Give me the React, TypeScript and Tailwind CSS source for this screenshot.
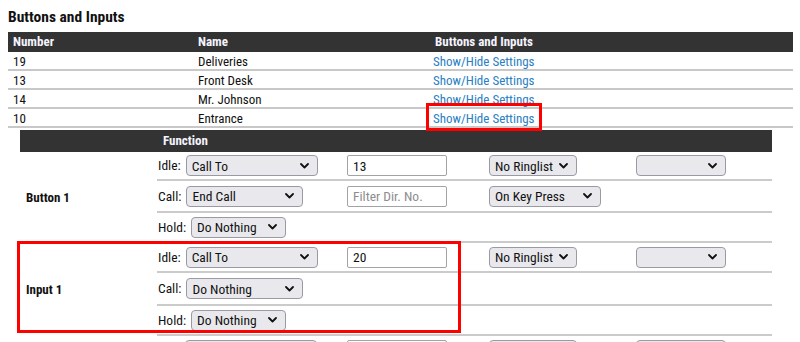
const FONT = "font-['Roboto_Condensed',Roboto,Arial,sans-serif]";

function Chevron() {
  return (
    <svg width="9" height="6" viewBox="0 0 9 6" className="shrink-0">
      <path d="M1 1 L4.5 4.5 L8 1" fill="none" stroke="#111" strokeWidth="1.8" strokeLinecap="round" strokeLinejoin="round" />
    </svg>
  );
}

function Select({ value, w }: { value: string; w: string }) {
  return (
    <div className={`${w} h-[21px] flex items-center justify-between pl-[5px] pr-[8px] bg-[#e9e9ed] border border-[#9a9aa4] rounded-[4px] text-[13.5px] font-normal text-[#111] leading-[16px]`}>
      <span className="whitespace-nowrap">{value}</span>
      <Chevron />
    </div>
  );
}

function TextInput({ value, placeholder }: { value?: string; placeholder?: string }) {
  return (
    <div className="w-[100px] h-[21px] flex items-center pl-[5px] bg-white border border-[#a3a3a3] rounded-[2px] text-[13.5px] leading-[16px]">
      {value ? <span className="text-[#111]">{value}</span> : placeholder ? <span className="text-[#8d8d8d] whitespace-nowrap">{placeholder}</span> : null}
    </div>
  );
}

type Row = {
  label: string;
  sel: string;
  selW: string;
  input?: { value?: string; placeholder?: string };
  sel2?: { value: string; w: string };
  sel3?: boolean;
  h: string;
};

function Group({ name, rows, ghost }: { name: string; rows: Row[]; ghost?: boolean }) {
  return (
    <div className="flex">
      <div className="w-[137px] flex items-center pl-[6px] text-[13px] font-bold text-[#111]">{name}</div>
      <div className="flex-1 flex flex-col">
        {rows.map((r, i) => (
          <div key={i} className={`${r.h} grid grid-cols-[190px_142px_147px_1fr] items-center border-b-2 border-[#cbcbcb]`}>
            <div className="flex items-center gap-[5px] pl-[1px]">
              {ghost ? <div className="w-[22px]" /> : <span className="text-[13.5px] text-[#111]">{r.label}</span>}
              <Select value={r.sel} w={r.selW} />
            </div>
            <div>{r.input && <TextInput value={r.input.value} placeholder={r.input.placeholder} />}</div>
            <div>{r.sel2 && <Select value={r.sel2.value} w={r.sel2.w} />}</div>
            <div>{r.sel3 && <Select value="" w="w-[90px]" />}</div>
          </div>
        ))}
      </div>
    </div>
  );
}

export default function App() {
  const list = [
    ['19', 'Deliveries'],
    ['13', 'Front Desk'],
    ['14', 'Mr. Johnson'],
    ['10', 'Entrance'],
  ];
  return (
    <div className={`relative w-[800px] h-[342px] overflow-hidden bg-white ${FONT} text-[#111]`}>
      <div className="pt-[8px] px-[8px]">
        <h2 className="h-[18px] leading-[18px] text-[15.5px] font-bold mb-[6px]">Buttons and Inputs</h2>
        <div className="w-[785px]">
          <div className="h-[20px] grid grid-cols-[185px_235px_1fr] items-center bg-[#333333] text-[13px] font-bold text-[#f4f4ff]">
            <span className="pl-[5px]">Number</span>
            <span className="pl-[5px]">Name</span>
            <span className="pl-[7px]">Buttons and Inputs</span>
          </div>
          {list.map(([n, name]) => (
            <div key={n} className="h-[19px] grid grid-cols-[185px_235px_1fr] items-center border-b-2 border-[#c8c8c8] text-[13px]">
              <span className="pl-[5px]">{n}</span>
              <span className="pl-[5px]">{name}</span>
              <span className="pl-[5px] text-[#2a80c2]">Show/Hide Settings</span>
            </div>
          ))}
        </div>
        <div className="ml-[12px] mt-[2px] w-[752px]">
          <div className="h-[22px] flex items-center bg-[#333333] text-[13px] font-bold text-[#f4f4ff]">
            <span className="pl-[143px]">Function</span>
          </div>
          <Group
            name="Button 1"
            rows={[
              { label: 'Idle:', sel: 'Call To', selW: 'w-[132px]', input: { value: '13' }, sel2: { value: 'No Ringlist', w: 'w-[88px]' }, sel3: true, h: 'h-[29px]' },
              { label: 'Call:', sel: 'End Call', selW: 'w-[117px]', input: { placeholder: 'Filter Dir. No.' }, sel2: { value: 'On Key Press', w: 'w-[112px]' }, h: 'h-[32px]' },
              { label: 'Hold:', sel: 'Do Nothing', selW: 'w-[95px]', h: 'h-[30px]' },
            ]}
          />
          <Group
            name="Input 1"
            rows={[
              { label: 'Idle:', sel: 'Call To', selW: 'w-[132px]', input: { value: '20' }, sel2: { value: 'No Ringlist', w: 'w-[88px]' }, sel3: true, h: 'h-[30px]' },
              { label: 'Call:', sel: 'Do Nothing', selW: 'w-[117px]', h: 'h-[33px]' },
              { label: 'Hold:', sel: 'Do Nothing', selW: 'w-[95px]', h: 'h-[30px]' },
            ]}
          />
          <Group
            name=""
            ghost
            rows={[
              { label: '', sel: '', selW: 'w-[132px]', input: {}, sel2: { value: '', w: 'w-[88px]' }, sel3: true, h: 'h-[30px]' },
            ]}
          />
        </div>
      </div>
      <div className="absolute left-[426px] top-[103px] w-[116px] h-[28px] border-[3px] border-[#ff0000]" />
      <div className="absolute left-[17px] top-[241px] w-[444px] h-[92px] border-[3px] border-[#ff0000]" />
    </div>
  );
}
